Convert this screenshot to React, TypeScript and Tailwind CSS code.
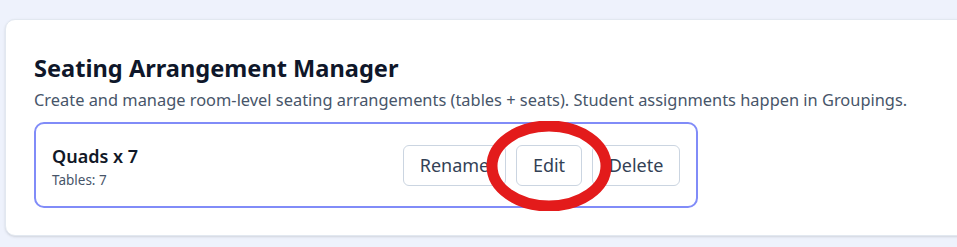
export default function App() {
  return (
    <div className="min-h-screen w-full overflow-hidden bg-[#eef2fc] pt-[19px] pl-[5px] font-['Noto_Sans',sans-serif]">
      <div className="w-[1000px] h-[217px] rounded-[10px] bg-white border border-[#e2e8f0] shadow-sm pl-[28px] pt-[33px]">
        <h1 className="text-[23.6px] font-bold leading-[30px] text-[#0f172a]">Seating Arrangement Manager</h1>
        <p className="mt-[6px] text-[16.4px] leading-[22px] text-[#475569]">
          Create and manage room-level seating arrangements (tables + seats). Student assignments happen in Groupings.
        </p>
        <div className="mt-[11px] w-[664px] h-[86px] rounded-[10px] border-2 border-[#818cf8] px-4 flex items-center justify-between">
          <div className="flex flex-col pt-[3px]">
            <span className="text-[18px] font-semibold leading-[24px] text-[#111827]">Quads x 7</span>
            <span className="mt-[3px] text-[13.5px] leading-[18px] text-[#475569]">Tables: 7</span>
          </div>
          <div className="relative flex items-center gap-[10px]">
            <button className="h-[41px] w-[103px] rounded-md border border-[#cbd5e1] bg-white text-[18px] text-[#334155]">Rename</button>
            <button className="h-[41px] w-[66px] rounded-md border border-[#cbd5e1] bg-white text-[18px] text-[#334155]">Edit</button>
            <button className="h-[41px] w-[88px] rounded-md border border-[#cbd5e1] bg-white text-[18px] text-[#334155]">Delete</button>
            <svg className="absolute left-[83px] top-[-24px] pointer-events-none" width="126" height="90" viewBox="0 0 126 90">
              <ellipse cx="63" cy="45" rx="57" ry="40" fill="none" stroke="#e31b1b" strokeWidth="11" />
            </svg>
          </div>
        </div>
      </div>
    </div>
  );
}
